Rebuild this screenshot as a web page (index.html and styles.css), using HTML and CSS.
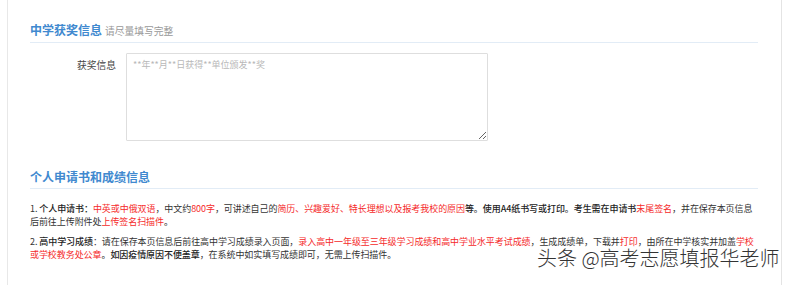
FILE: index.html
```html
<!DOCTYPE html>
<html lang="zh-CN">
<head>
<meta charset="utf-8">
<title>中学获奖信息</title>
<link rel="stylesheet" href="styles.css">
</head>
<body>
<div class="panel">
  <div class="sec-title first"><span class="sec-name">中学获奖信息</span><span class="sec-sub">请尽量填写完整</span></div>
  <div class="form-row">
    <label class="form-label" for="award">获奖信息</label>
    <textarea id="award" class="form-area" placeholder="**年**月**日获得**单位颁发**奖"></textarea>
  </div>
  <div class="sec-title second"><span class="sec-name">个人申请书和成绩信息</span></div>
  <p class="note">1. <b>个人申请书：</b><span class="red">中英或中俄双语</span>，中文约<span class="red">800字</span>，可讲述自己的<span class="red">简历、兴趣爱好、特长理想以及报考我校的原因</span><b>等。使用A4纸书写或打印。考生需在申请书</b><span class="red">末尾签名</span>，并在保存本页信息后前往上传附件处<span class="red">上传签名扫描件</span><b>。</b></p>
  <p class="note">2. <b>高中学习成绩</b>：请在保存本页信息后前往高中学习成绩录入页面，<span class="red">录入高中一年级至三年级学习成绩和高中学业水平考试成绩</span>，生成成绩单，下载并<span class="red">打印</span>，由所在中学核实并加盖<span class="red">学校或学校教务处公章</span><b>。如因疫情原因不便盖章</b>，在系统中如实填写成绩即可，无需上传扫描件<b>。</b></p>
</div>
<div class="watermark">头条 @高考志愿填报华老师</div>
</body>
</html>
```
FILE: styles.css
```css
html, body {
  margin: 0;
  padding: 0;
  background: #fff;
}
body {
  font-family: "Noto Sans CJK SC", "Noto Sans", sans-serif;
  color: #333;
  width: 790px;
  height: 285px;
  overflow: hidden;
  position: relative;
}
.panel {
  margin-left: 7px;
  width: 775px;
  height: 285px;
  box-sizing: border-box;
  border-left: 1px solid #e8e8e8;
  border-right: 1px solid #e4e4e4;
  padding: 0 23px 0 22px;
  overflow: hidden;
}
.sec-title {
  border-bottom: 1px solid #e2ecf6;
  padding-bottom: 3px;
  line-height: 16px;
  display: flex;
  align-items: baseline;
}
.sec-title.first { padding-top: 22px; }
.sec-title.second { margin-top: 28px; }
.sec-name {
  font-size: 12px;
  font-weight: bold;
  color: #4089cf;
}
.sec-sub {
  font-size: 9.75px;
  color: #999;
  margin-left: 3px;
}
.form-row {
  display: flex;
  margin-top: 10px;
}
.form-label {
  width: 86px;
  text-align: right;
  font-size: 9.75px;
  line-height: 12px;
  padding-top: 6px;
  color: #444;
}
.form-area {
  margin: 0 0 0 10px;
  width: 362px;
  height: 88px;
  box-sizing: border-box;
  border: 1px solid #dedede;
  border-radius: 1px;
  padding: 5px 6px;
  font-family: "Noto Sans CJK SC", "Noto Sans", sans-serif;
  font-size: 9px;
  line-height: 12px;
  color: #333;
  resize: both;
  outline: none;
}
.form-area::placeholder {
  color: #b8b8b8;
}
.note {
  margin: 0;
  font-size: 9px;
  line-height: 13.1px;
  letter-spacing: -0.07px;
  color: #333;
}
.note + .note { margin-top: 7px; }
.sec-title + .note { margin-top: 13px; }
.note b { font-weight: 500; color: #222; }
.red { color: #f52a2a; }
.watermark {
  position: absolute;
  left: 537px;
  top: 245px;
  font-size: 20px;
  line-height: 26px;
  font-weight: 300;
  color: #333;
  white-space: nowrap;
  text-shadow: 0 0 2px #fff, 0 0 2px #fff, 1px 1px 0 #fff, -1px -1px 0 #fff;
}
```
